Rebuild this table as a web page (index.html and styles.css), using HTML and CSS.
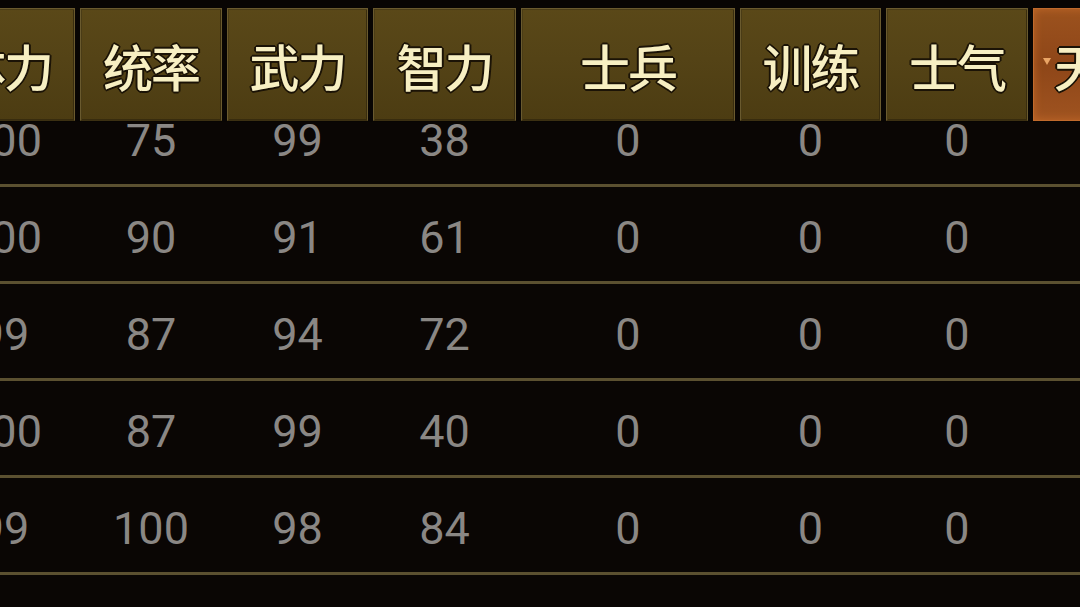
FILE: index.html
```html
<!DOCTYPE html>
<html lang="zh">
<head>
<meta charset="utf-8">
<title>武将列表</title>
<link rel="stylesheet" href="styles.css">
</head>
<body>
<div class="screen">
  <div class="header cols">
    <div class="hbtn">体力</div>
    <div class="hbtn">统率</div>
    <div class="hbtn">武力</div>
    <div class="hbtn">智力</div>
    <div class="hbtn">士兵</div>
    <div class="hbtn">训练</div>
    <div class="hbtn">士气</div>
    <div class="hbtn active"><span class="tri"></span>天赋</div>
  </div>
  <div class="viewport">
    <div class="rows">
      <div class="row cols"><span>100</span><span>75</span><span>99</span><span>38</span><span>0</span><span>0</span><span>0</span><span></span></div>
      <div class="row cols"><span>100</span><span>90</span><span>91</span><span>61</span><span>0</span><span>0</span><span>0</span><span></span></div>
      <div class="row cols"><span>99</span><span>87</span><span>94</span><span>72</span><span>0</span><span>0</span><span>0</span><span></span></div>
      <div class="row cols"><span>100</span><span>87</span><span>99</span><span>40</span><span>0</span><span>0</span><span>0</span><span></span></div>
      <div class="row cols"><span>99</span><span>100</span><span>98</span><span>84</span><span>0</span><span>0</span><span>0</span><span></span></div>
      <div class="row cols"><span>98</span><span>82</span><span>90</span><span>70</span><span>0</span><span>0</span><span>0</span><span></span></div>
    </div>
  </div>
</div>
</body>
</html>
```

FILE: styles.css
```css
html, body {
  margin: 0;
  padding: 0;
  background: #0a0604;
  overflow: hidden;
}

.screen {
  width: 1080px;
  height: 607px;
  overflow: hidden;
  background: #0a0604;
  display: flex;
  flex-direction: column;
}

.cols {
  display: grid;
  grid-template-columns: 142px 142px 141px 143px 214px 141px 142px 142px;
  column-gap: 5px;
  margin-left: -67px;
  width: 1158px;
}

.header {
  padding-top: 8px;
  height: 114px;
  flex: none;
  background: #080503;
}

.hbtn {
  box-sizing: border-box;
  height: 113px;
  border: 1px solid #6a5a2e;
  border-bottom-color: #3c3012;
  background: linear-gradient(180deg, #5a4818 0%, #544316 45%, #4c3c12 100%);
  box-shadow: inset 1px 1px 0 #4a3c16, inset -1px -1px 0 #382c0e;
  display: flex;
  align-items: center;
  justify-content: center;
  font-family: "Noto Sans CJK SC", "Noto Sans", sans-serif;
  font-size: 50px;
  font-weight: 500;
  color: #f7efc2;
  letter-spacing: -2px;
  text-shadow:
    -2px 0 0 #1b1306, 2px 0 0 #1b1306, 0 -2px 0 #1b1306, 0 2px 0 #1b1306,
    -1px -1px 0 #1b1306, 1px -1px 0 #1b1306, -1px 1px 0 #1b1306, 1px 1px 0 #1b1306;
  white-space: nowrap;
  overflow: hidden;
}

.hbtn.active {
  border-color: #c06a2c;
  background: linear-gradient(180deg, #9c521e 0%, #8e4618 50%, #9f5320 100%);
  box-shadow: inset 0 0 8px #c06828;
  justify-content: flex-start;
  padding-left: 9px;
}

.tri {
  width: 0;
  height: 0;
  border-left: 4px solid transparent;
  border-right: 4px solid transparent;
  border-top: 7px solid #eaa566;
  margin-right: 3px;
  margin-top: -6px;
}

.viewport {
  flex: 1;
  overflow: hidden;
}

.rows {
  margin-top: -32px;
}

.row {
  box-sizing: border-box;
  height: 97px;
  padding-top: 6px;
  border-bottom: 3px solid #5b5030;
  align-items: center;
  font-family: Roboto, "Noto Sans", sans-serif;
  font-size: 45px;
  color: #8a8784;
}

.row span {
  text-align: center;
}
```
